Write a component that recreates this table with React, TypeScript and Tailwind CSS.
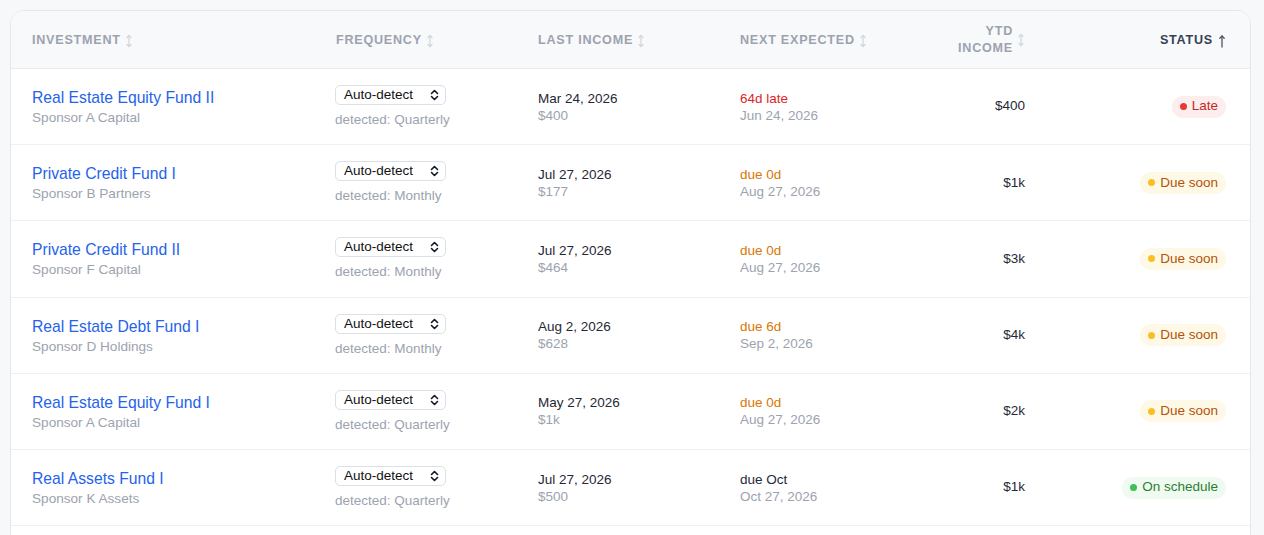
import React from "react";

type Row = {
  name: string;
  sponsor: string;
  detected: string;
  lastDate: string;
  lastAmt: string;
  nextTop: string;
  nextTone: "red" | "amber" | "dark";
  nextDate: string;
  ytd: string;
  status: "late" | "soon" | "ok";
};

const rows: Row[] = [
  { name: "Real Estate Equity Fund II", sponsor: "Sponsor A Capital", detected: "Quarterly", lastDate: "Mar 24, 2026", lastAmt: "$400", nextTop: "64d late", nextTone: "red", nextDate: "Jun 24, 2026", ytd: "$400", status: "late" },
  { name: "Private Credit Fund I", sponsor: "Sponsor B Partners", detected: "Monthly", lastDate: "Jul 27, 2026", lastAmt: "$177", nextTop: "due 0d", nextTone: "amber", nextDate: "Aug 27, 2026", ytd: "$1k", status: "soon" },
  { name: "Private Credit Fund II", sponsor: "Sponsor F Capital", detected: "Monthly", lastDate: "Jul 27, 2026", lastAmt: "$464", nextTop: "due 0d", nextTone: "amber", nextDate: "Aug 27, 2026", ytd: "$3k", status: "soon" },
  { name: "Real Estate Debt Fund I", sponsor: "Sponsor D Holdings", detected: "Monthly", lastDate: "Aug 2, 2026", lastAmt: "$628", nextTop: "due 6d", nextTone: "amber", nextDate: "Sep 2, 2026", ytd: "$4k", status: "soon" },
  { name: "Real Estate Equity Fund I", sponsor: "Sponsor A Capital", detected: "Quarterly", lastDate: "May 27, 2026", lastAmt: "$1k", nextTop: "due 0d", nextTone: "amber", nextDate: "Aug 27, 2026", ytd: "$2k", status: "soon" },
  { name: "Real Assets Fund I", sponsor: "Sponsor K Assets", detected: "Quarterly", lastDate: "Jul 27, 2026", lastAmt: "$500", nextTop: "due Oct", nextTone: "dark", nextDate: "Oct 27, 2026", ytd: "$1k", status: "ok" },
];

function SortIcon() {
  return (
    <svg width="8" height="14" viewBox="0 0 8 14" className="ml-[4px] shrink-0" fill="none" stroke="#d1d5db" strokeWidth="1.2" strokeLinecap="round" strokeLinejoin="round">
      <path d="M4 1.5v11" />
      <path d="M2 3.5l2-2 2 2" />
      <path d="M2 10.5l2 2 2-2" />
    </svg>
  );
}

function UpIcon() {
  return (
    <svg width="8" height="14" viewBox="0 0 8 14" className="ml-[5px] shrink-0" fill="none" stroke="#4b5563" strokeWidth="1.3" strokeLinecap="round" strokeLinejoin="round">
      <path d="M4 2v11" />
      <path d="M1.8 4.2L4 2l2.2 2.2" />
    </svg>
  );
}

function Chevrons() {
  return (
    <svg width="9" height="12" viewBox="0 0 9 12" fill="none" stroke="#111827" strokeWidth="1.6" strokeLinecap="round" strokeLinejoin="round">
      <path d="M1.5 4.5L4.5 1.5l3 3" />
      <path d="M1.5 7.5l3 3 3-3" />
    </svg>
  );
}

function Badge({ status }: { status: Row["status"] }) {
  if (status === "late")
    return (
      <span className="inline-flex items-center gap-[5px] rounded-full bg-[#fdeeee] px-[8px] h-[22px] text-[13.5px] text-[#c62828]">
        <span className="w-[7px] h-[7px] rounded-full bg-[#e53935]" />
        Late
      </span>
    );
  if (status === "soon")
    return (
      <span className="inline-flex items-center gap-[5px] rounded-full bg-[#fef8e6] px-[8px] h-[22px] text-[13.5px] text-[#b45309]">
        <span className="w-[7px] h-[7px] rounded-full bg-[#fbbf24]" />
        Due soon
      </span>
    );
  return (
    <span className="inline-flex items-center gap-[5px] rounded-full bg-[#effbf1] px-[8px] h-[22px] text-[13.5px] text-[#2e7d32]">
      <span className="w-[7px] h-[7px] rounded-full bg-[#3fbf5a]" />
      On schedule
    </span>
  );
}

const cols = "grid grid-cols-[303px_202px_202px_202px_127px_1fr]";

export default function App() {
  return (
    <div className="h-[535px] bg-[#f7f8fa] pt-[10px] pl-[10px] overflow-hidden" style={{ fontFamily: '"Liberation Sans", Arial, sans-serif' }}>
      <div className="w-[1241px] h-[540px] rounded-t-[14px] border border-[#e5e7eb] bg-white overflow-hidden">
        <div className={`${cols} h-[58px] bg-[#f8f9fb] border-b border-[#e8eaee] text-[12.6px] font-bold tracking-[0.06em] uppercase text-[#9ca3af]`}>
          <div className="flex items-center pl-[21px] pt-[2px]">Investment<SortIcon /></div>
          <div className="flex items-center pl-[22px] pt-[2px]">Frequency<SortIcon /></div>
          <div className="flex items-center pl-[22px] pt-[2px]">Last Income<SortIcon /></div>
          <div className="flex items-center pl-[22px] pt-[2px]">Next Expected<SortIcon /></div>
          <div className="flex items-center justify-end pr-[22px]">
            <span className="text-right leading-[17px]">YTD<br />Income</span>
            <SortIcon />
          </div>
          <div className="flex items-center justify-end pr-[24px] pt-[2px] text-[#374151]">Status<UpIcon /></div>
        </div>
        {rows.map((r, i) => (
          <div key={i} className={`${cols} h-[76.2px] border-b border-[#eef0f3]`}>
            <div className="flex flex-col justify-center pl-[21px] pt-[1px]">
              <div className="text-[15.7px] leading-[21px] text-[#2563eb]">{r.name}</div>
              <div className="text-[13.6px] leading-[19px] text-[#9ca3af]">{r.sponsor}</div>
            </div>
            <div className="flex flex-col justify-center pl-[21px]">
              <div className="flex items-center justify-between w-[111px] h-[20px] rounded-[5px] border border-[#dcdfe4] bg-white pl-[8px] pr-[6px] text-[13.5px] text-[#111]">
                <span>Auto-detect</span>
                <Chevrons />
              </div>
              <div className="mt-[6px] text-[13.5px] leading-[17px] text-[#9ca3af]">detected: {r.detected}</div>
            </div>
            <div className="flex flex-col justify-center pl-[22px]">
              <div className="text-[13.5px] leading-[17px] text-[#1f2937]">{r.lastDate}</div>
              <div className="text-[13.5px] leading-[17px] text-[#9ca3af]">{r.lastAmt}</div>
            </div>
            <div className="flex flex-col justify-center pl-[22px]">
              <div className={`text-[13.5px] leading-[17px] ${r.nextTone === "red" ? "text-[#dc2626]" : r.nextTone === "amber" ? "text-[#d97706]" : "text-[#1f2937]"}`}>{r.nextTop}</div>
              <div className="text-[13.5px] leading-[17px] text-[#9ca3af]">{r.nextDate}</div>
            </div>
            <div className="flex items-center justify-end pr-[22px] text-[13.5px] text-[#1f2937]">{r.ytd}</div>
            <div className="flex items-center justify-end pr-[24px]"><Badge status={r.status} /></div>
          </div>
        ))}
      </div>
    </div>
  );
}
